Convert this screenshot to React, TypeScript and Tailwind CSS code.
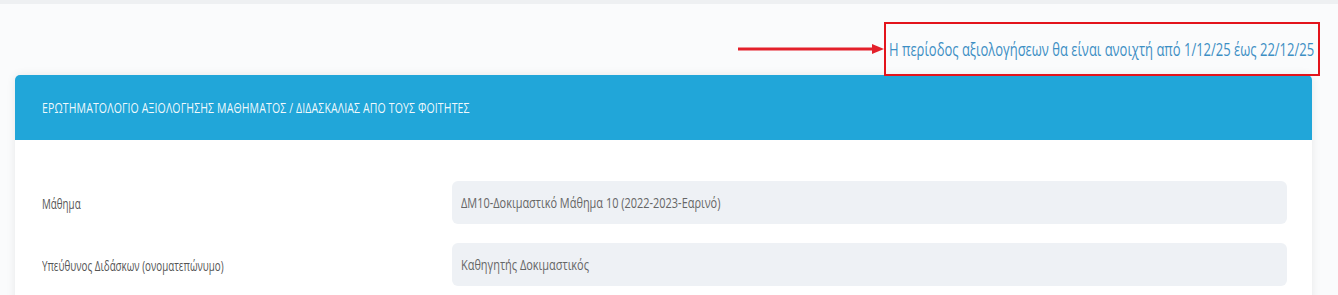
import React from 'react'

const rows = [
  { label: 'Μάθημα', value: 'ΔΜ10-Δοκιμαστικό Μάθημα 10 (2022-2023-Εαρινό)' },
  { label: 'Υπεύθυνος Διδάσκων (ονοματεπώνυμο)', value: 'Καθηγητής Δοκιμαστικός' },
]

// the screenshot is squeezed sideways, so text is narrowed with scale-x
function Narrow({ children, className = '' }: { children: React.ReactNode; className?: string }) {
  return (
    <span className={`inline-block whitespace-nowrap origin-left ${className}`}>
      {children}
    </span>
  )
}

export default function App() {
  return (
    <div
      className="w-[1338px] h-[295px] overflow-hidden bg-[#fafbfc] border-t-4 border-[#eef0f2]"
      style={{ fontFamily: '"Open Sans", "Noto Sans", sans-serif' }}
    >
      {/* notice with arrow */}
      <div className="flex justify-end items-center pt-[18px] pr-[18px]">
        <svg width="146" height="14" viewBox="0 0 146 14" className="shrink-0">
          <line x1="0" y1="7" x2="136" y2="7" stroke="#e3202a" strokeWidth="3" strokeLinecap="round" />
          <polygon points="134,2 146,7 134,12" fill="#e3202a" />
        </svg>
        <div className="w-[436px] h-[54px] border-2 border-[#e3141c] flex items-center pl-[3px] overflow-visible">
          <Narrow className="text-[18px] text-[#3d8fc4] scale-x-[0.722]">
            Η περίοδος αξιολογήσεων θα είναι ανοιχτή από 1/12/25 έως 22/12/25
          </Narrow>
        </div>
      </div>

      {/* card */}
      <div className="ml-[15px] mr-[26px] -mt-px bg-white rounded-t-[5px] shadow-[0_0_10px_rgba(0,0,0,0.08)]">
        <div className="h-[65px] bg-[#21a6d9] rounded-t-[5px] flex items-center pl-[27px]">
          <Narrow className="text-[15px] text-white/95 tracking-[0.2px] scale-x-[0.7]">
            ΕΡΩΤΗΜΑΤΟΛΟΓΙΟ ΑΞΙΟΛΟΓΗΣΗΣ ΜΑΘΗΜΑΤΟΣ / ΔΙΔΑΣΚΑΛΙΑΣ ΑΠΟ ΤΟΥΣ ΦΟΙΤΗΤΕΣ
          </Narrow>
        </div>
        <div className="pt-[41px] pl-[27px] pr-[25px] flex flex-col gap-[19px] pb-6">
          {rows.map((r) => (
            <div key={r.label} className="flex items-center">
              <div className="w-[410px] shrink-0">
                <Narrow className="text-[14px] text-[#555] scale-x-[0.7]">{r.label}</Narrow>
              </div>
              <div className="flex-1 h-[43px] rounded-[6px] bg-[#eef1f5] flex items-center pl-[9px]">
                <Narrow className="text-[15px] text-[#666] scale-x-[0.73]">{r.value}</Narrow>
              </div>
            </div>
          ))}
        </div>
      </div>
    </div>
  )
}
